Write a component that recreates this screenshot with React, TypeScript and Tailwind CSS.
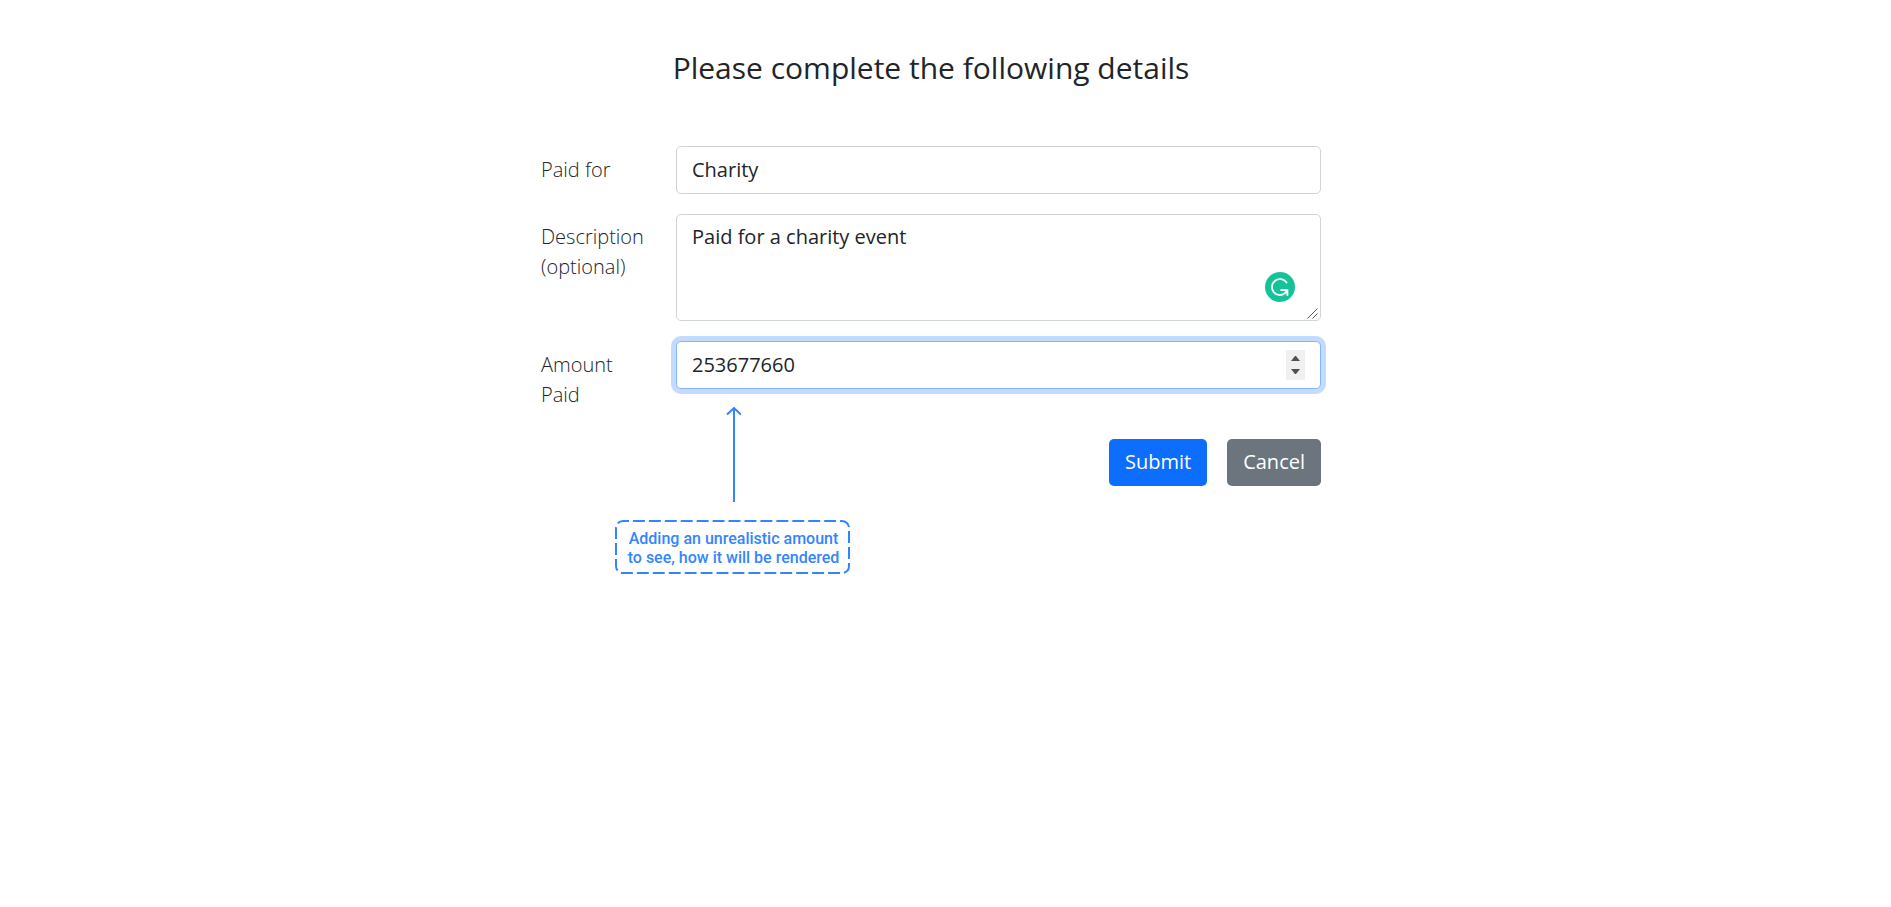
const control =
  "block w-full rounded-[5px] border bg-white px-[15px] text-xl leading-[30px] text-[#212529] outline-none";

const label = "w-[135px] shrink-0 pr-6 text-xl leading-[30px] font-light text-[#212529]";

function AssistantBadge() {
  return (
    <svg className="absolute right-[26px] bottom-[19px] size-[30px]" viewBox="0 0 30 30" fill="none" aria-hidden="true">
      <circle cx="15" cy="15" r="15" fill="#15c39a" />
      <path
        d="M21.6 10.6A8 8 0 1 0 20.6 20.7M16.2 18h6.2v5.2M22.2 18.2l-2.2 3"
        stroke="#fff"
        strokeWidth="1.8"
        strokeLinecap="round"
      />
    </svg>
  );
}

function ResizeGrip() {
  return (
    <svg className="pointer-events-none absolute right-[2px] bottom-[2px] size-[12px]" viewBox="0 0 12 12" fill="none" stroke="#555" aria-hidden="true">
      <path d="M.5 11.5 10.5 1.5M5.5 11.5l5-5" />
    </svg>
  );
}

function StepArrows() {
  return (
    <svg className="pointer-events-none absolute top-[9px] right-4 h-[30px] w-[19px]" viewBox="0 0 19 30" aria-hidden="true">
      <path d="M0 0h19v30H0z" fill="#f0f0f0" />
      <path d="M5 11h9L10 6H9zM5 19h9l-4 5H9z" fill="#505050" />
    </svg>
  );
}

function AmountNote() {
  return (
    <div className="absolute top-full -left-[61px] flex w-[235px] flex-col items-center pt-[17px] text-[#3385ff]">
      <svg className="h-[96px] w-[17px]" viewBox="0 0 17 96" fill="none" stroke="currentColor" strokeWidth="2" strokeLinejoin="round" aria-hidden="true">
        <path d="M10 96V2M3 8.500l7-6.500 7 6.500" />
      </svg>
      <p className="relative mt-[18px] w-full pt-[9px] pb-[7px] pl-0.5 text-center font-['Roboto',sans-serif] text-base leading-[19px] font-medium">
        <svg className="absolute inset-0 size-full" viewBox="0 0 235 54" fill="none" aria-hidden="true">
          <rect
            x="1"
            y="1"
            width="233"
            height="52"
            rx="7"
            pathLength="560"
            stroke="currentColor"
            strokeWidth="2"
            strokeDasharray="12 4"
            strokeDashoffset="6"
          />
        </svg>
        Adding an unrealistic amount
        <br />
        to see, how it will be rendered
      </p>
    </div>
  );
}

export default function App() {
  return (
    <main className="min-h-screen bg-white pr-[29px] font-['Open_Sans',sans-serif]">
      <form className="mx-auto max-w-[780px] pt-12" onSubmit={(e) => e.preventDefault()}>
        <h1 className="text-center text-[30px] leading-10 text-[#212529]">Please complete the following details</h1>

        <div className="mt-[58px] flex flex-col gap-5">
          <div className="flex items-start">
            <label htmlFor="paid-for" className={`${label} pt-[9px]`}>Paid for</label>
            <input id="paid-for" type="text" defaultValue="Charity" className={`${control} h-12 border-[#ced4da] pb-0.5`} />
          </div>

          <div className="flex items-start">
            <label htmlFor="description" className={`${label} pt-2`}>Description (optional)</label>
            <div className="relative flex-1">
              <textarea
                id="description"
                defaultValue="Paid for a charity event"
                className={`${control} h-[107px] resize border-[#ced4da] py-[7px] [&::-webkit-resizer]:bg-transparent`}
              />
              <AssistantBadge />
              <ResizeGrip />
            </div>
          </div>

          <div className="flex items-start">
            <label htmlFor="amount" className={`${label} pt-[9px]`}>Amount Paid</label>
            <div className="relative flex-1">
              <input
                id="amount"
                type="number"
                defaultValue={253677660}
                className={`${control} h-12 border-[#86b7fe] pb-0.5 shadow-[0_0_0_5px_#c2dbfe]`}
              />
              <StepArrows />
              <AmountNote />
            </div>
          </div>
        </div>

        <div className="mt-[29px] flex justify-end gap-5 text-xl leading-[30px] text-white">
          <button type="submit" className="rounded-[5px] bg-[#0d6efd] px-4 pt-2 pb-[9px]">Submit</button>
          <button type="button" className="rounded-[5px] bg-[#6c757d] px-4 pt-2 pb-[9px]">Cancel</button>
        </div>
      </form>
    </main>
  );
}
